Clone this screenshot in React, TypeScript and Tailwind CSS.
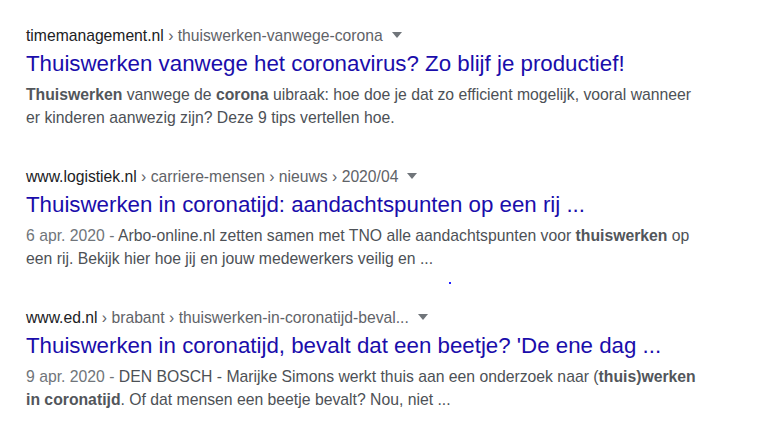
const results = [
  {
    domain: 'timemanagement.nl',
    crumbs: ['thuiswerken-vanwege-corona'],
    title: 'Thuiswerken vanwege het coronavirus? Zo blijf je productief!',
    date: '',
    snippet: [
      { b: true, t: 'Thuiswerken' },
      { t: ' vanwege de ' },
      { b: true, t: 'corona' },
      { t: ' uibraak: hoe doe je dat zo efficient mogelijk, vooral wanneer er kinderen aanwezig zijn? Deze 9 tips vertellen hoe.' },
    ],
  },
  {
    domain: 'www.logistiek.nl',
    crumbs: ['carriere-mensen', 'nieuws', '2020/04'],
    title: 'Thuiswerken in coronatijd: aandachtspunten op een rij ...',
    date: '6 apr. 2020 - ',
    snippet: [
      { t: 'Arbo-online.nl zetten samen met TNO alle aandachtspunten voor ' },
      { b: true, t: 'thuiswerken' },
      { t: ' op een rij. Bekijk hier hoe jij en jouw medewerkers veilig en ...' },
    ],
  },
  {
    domain: 'www.ed.nl',
    crumbs: ['brabant', 'thuiswerken-in-coronatijd-beval...'],
    title: "Thuiswerken in coronatijd, bevalt dat een beetje? 'De ene dag ...",
    date: '9 apr. 2020 - ',
    snippet: [
      { t: 'DEN BOSCH - Marijke Simons werkt thuis aan een onderzoek naar (' },
      { b: true, t: 'thuis)werken in coronatijd' },
      { t: '. Of dat mensen een beetje bevalt? Nou, niet ...' },
    ],
  },
]

export default function App() {
  return (
    <div
      className="relative w-[770px] h-[439px] bg-white overflow-hidden pl-[26px] pt-[25px]"
      style={{ fontFamily: '"Liberation Sans", Arial, sans-serif' }}
    >
      <div className="flex flex-col gap-[37px]">
        {results.map((r) => (
          <div key={r.domain} className="w-[676px]">
            <div className="text-[15.7px] leading-[22px] whitespace-nowrap">
              <span className="text-[#202124]">{r.domain}</span>
              {r.crumbs.map((c) => (
                <span key={c} className="text-[#5f6368]">
                  {' › '}
                  {c}
                </span>
              ))}
              <span className="inline-block align-middle ml-[9px] mb-[3px] w-0 h-0 border-x-[5px] border-x-transparent border-t-[6px] border-t-[#70757a]" />
            </div>
            <div className="mt-[4px] text-[22.3px] leading-[26px] text-[#1a0dab]">{r.title}</div>
            <div className="mt-[7px] text-[15.75px] leading-[22.5px] text-[#4d5156]">
              {r.date && <span className="text-[#70757a]">{r.date}</span>}
              {r.snippet.map((s, i) =>
                s.b ? (
                  <b key={i} className="font-bold text-[#52565b]">
                    {s.t}
                  </b>
                ) : (
                  <span key={i}>{s.t}</span>
                ),
              )}
            </div>
          </div>
        ))}
      </div>
      <div className="absolute left-[449px] top-[282px] w-[2px] h-[2px] bg-[#2020ff]" />
    </div>
  )
}
